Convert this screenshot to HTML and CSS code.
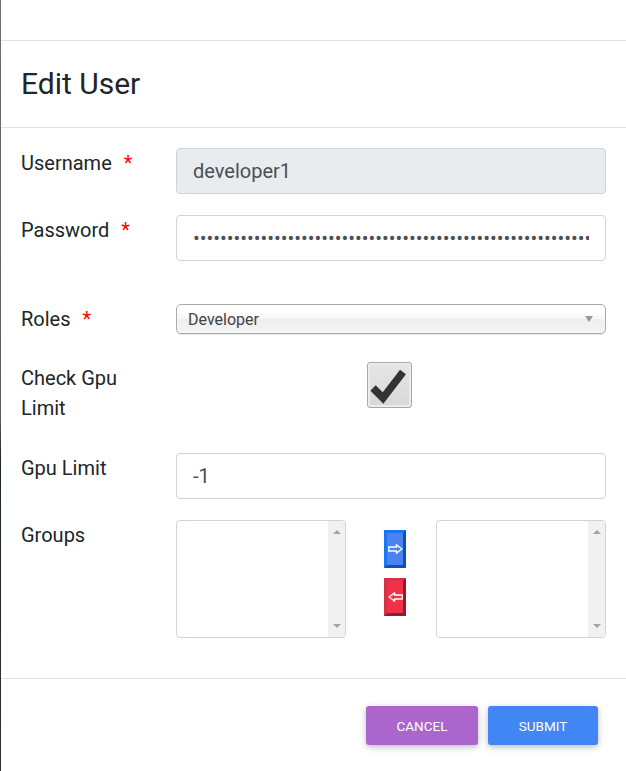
FILE: index.html
```html
<!DOCTYPE html>
<html>
<head>
<meta charset="utf-8">
<link rel="stylesheet" href="styles.css">
</head>
<body>
<div class="modal">
  <div class="topbar"></div>
  <div class="header"><h4 class="title">Edit User</h4></div>
  <form class="body">
    <div class="row row-user">
      <label class="label">Username<span class="req">*</span></label>
      <div class="field"><input class="input input-disabled" type="text" value="developer1" disabled></div>
    </div>
    <div class="row row-pass">
      <label class="label">Password<span class="req">*</span></label>
      <div class="field"><input class="input" type="password" value="aaaaaaaaaaaaaaaaaaaaaaaaaaaaaaaaaaaaaaaaaaaaaaaaaaaaaaaaaaaaaaaaaaaa"></div>
    </div>
    <div class="row row-roles">
      <label class="label">Roles<span class="req">*</span></label>
      <div class="field">
        <div class="select"><span class="select-text">Developer</span><span class="select-arrow"></span></div>
      </div>
    </div>
    <div class="row row-check">
      <label class="label">Check Gpu Limit</label>
      <div class="field field-check">
        <div class="checkbox">
          <svg width="43" height="44" viewBox="0 0 43 44"><polyline points="5,25 15,35 35,9" fill="none" stroke="#333" stroke-width="7.5"/></svg>
        </div>
      </div>
    </div>
    <div class="row row-gpu">
      <label class="label">Gpu Limit</label>
      <div class="field"><input class="input" type="text" value="-1"></div>
    </div>
    <div class="row row-groups">
      <label class="label">Groups</label>
      <div class="field field-groups">
        <div class="listbox">
          <div class="list-content"></div>
          <div class="scrollbar"><span class="tri-up"></span><span class="tri-down"></span></div>
        </div>
        <div class="movers">
          <button type="button" class="mover mover-right">
            <svg width="15" height="10" viewBox="0 0 15 10"><polygon points="0.75,3 8.5,3 8.5,0.9 14,5 8.5,9.1 8.5,7 0.75,7" fill="none" stroke="#fff" stroke-width="1.3"/></svg>
          </button>
          <button type="button" class="mover mover-left">
            <svg width="15" height="10" viewBox="0 0 15 10"><polygon points="14.25,3 6.5,3 6.5,0.9 1,5 6.5,9.1 6.5,7 14.25,7" fill="none" stroke="#fff" stroke-width="1.3"/></svg>
          </button>
        </div>
        <div class="listbox">
          <div class="list-content"></div>
          <div class="scrollbar"><span class="tri-up"></span><span class="tri-down"></span></div>
        </div>
      </div>
    </div>
  </form>
  <div class="footer">
    <button type="button" class="btn btn-cancel">Cancel</button>
    <button type="button" class="btn btn-submit">Submit</button>
  </div>
</div>
</body>
</html>
```
FILE: styles.css
```css
html, body {
  margin: 0;
  padding: 0;
}
body {
  background: linear-gradient(to bottom, #6e6e6e 0, #5c5c5c 420px, #1b2626 460px, #2a3434 771px);
  min-height: 771px;
  font-family: Roboto, "Liberation Sans", sans-serif;
  color: #212529;
}
.modal {
  width: 625px;
  margin-left: 1px;
  min-height: 771px;
  background: #fff;
}
.topbar {
  height: 40px;
  border-bottom: 1px solid #dee2e6;
}
.header {
  height: 86px;
  display: flex;
  align-items: center;
  padding: 0 20px;
  border-bottom: 1px solid #dee2e6;
}
.title {
  margin: 0;
  font-size: 30px;
  font-weight: 400;
  line-height: 36px;
  color: #212529;
}
.body {
  padding: 20px 20px 40px;
  border-bottom: 1px solid #dee2e6;
}
.row {
  display: flex;
  align-items: flex-start;
}
.row-user { margin-bottom: 21px; }
.row-pass { margin-bottom: 43px; }
.row-roles { margin-bottom: 29px; }
.row-check { margin-bottom: 30px; min-height: 60px; }
.row-gpu { margin-bottom: 21px; }
.label {
  width: 125px;
  margin-right: 30px;
  font-size: 20px;
  line-height: 30px;
  color: #212529;
}
.req {
  color: #ff0000;
  margin-left: 12px;
}
.field {
  width: 430px;
  display: flex;
}
.field-check {
  padding-left: 191px;
  box-sizing: border-box;
}
.input {
  box-sizing: border-box;
  width: 430px;
  height: 46px;
  margin: 0;
  padding: 0 16px;
  border: 1px solid #ced4da;
  border-radius: 4px;
  background: #fff;
  font-family: Roboto, "Liberation Sans", sans-serif;
  font-size: 20px;
  color: #495057;
  outline: none;
}
.input-disabled {
  background: #e9ecef;
  color: #495057;
  -webkit-text-fill-color: #495057;
  opacity: 1;
}
.select {
  box-sizing: border-box;
  width: 430px;
  height: 30px;
  border: 1px solid #aaa;
  border-radius: 5px;
  background: linear-gradient(to bottom, #fff 20%, #f6f6f6 50%, #eee 52%, #f4f4f4 100%);
  box-shadow: inset 0 0 3px #fff, 0 1px 1px rgba(0, 0, 0, 0.1);
  display: flex;
  align-items: center;
  justify-content: space-between;
  padding: 0 12px 0 11px;
}
.select-text {
  font-size: 16px;
  color: #444;
}
.select-arrow {
  width: 0;
  height: 0;
  border-left: 4px solid transparent;
  border-right: 4px solid transparent;
  border-top: 6px solid #999;
}
.checkbox {
  box-sizing: border-box;
  width: 45px;
  height: 46px;
  margin-top: -1px;
  border: 1px solid #a9a9a9;
  border-radius: 3px;
  background: linear-gradient(to bottom, #e6e6e6, #d8d8d8);
  box-shadow: inset 0 0 0 2px #ececec;
  display: flex;
  align-items: center;
  justify-content: center;
}
.field-groups {
  align-items: flex-start;
}
.listbox {
  box-sizing: border-box;
  width: 170px;
  height: 118px;
  border: 1px solid #ced4da;
  border-radius: 4px;
  display: flex;
  overflow: hidden;
  background: #fff;
}
.list-content {
  flex: 1;
}
.scrollbar {
  width: 17px;
  background: #f1f1f1;
  display: flex;
  flex-direction: column;
  justify-content: space-between;
  align-items: center;
  padding: 9px 0 9px;
}
.tri-up {
  width: 0;
  height: 0;
  border-left: 4px solid transparent;
  border-right: 4px solid transparent;
  border-bottom: 4px solid #a3a3a3;
}
.tri-down {
  width: 0;
  height: 0;
  border-left: 4px solid transparent;
  border-right: 4px solid transparent;
  border-top: 4px solid #a3a3a3;
}
.movers {
  width: 22px;
  margin: 10px 30px 0 38px;
  display: flex;
  flex-direction: column;
  gap: 10px;
}
.mover {
  box-sizing: border-box;
  width: 22px;
  height: 38px;
  padding: 0;
  margin: 0;
  border-width: 3px;
  border-style: solid;
  display: flex;
  align-items: center;
  justify-content: center;
}
.mover-right {
  background: #4a82f2;
  border-color: #1a75f5 #0b55b0 #0b55b0 #1a75f5;
}
.mover-left {
  background: #f2304a;
  border-color: #d23446 #8c2030 #8c2030 #d23446;
}
.footer {
  display: flex;
  justify-content: flex-end;
  gap: 10px;
  padding: 27px 28px 0 0;
}
.btn {
  height: 39px;
  border: none;
  border-radius: 3px;
  color: #fff;
  font-family: Roboto, "Liberation Sans", sans-serif;
  font-size: 13.5px;
  text-transform: uppercase;
  box-shadow: 0 2px 5px 0 rgba(0, 0, 0, 0.16), 0 2px 10px 0 rgba(0, 0, 0, 0.12);
  padding: 0;
}
.btn-cancel {
  width: 112px;
  background: #aa66cc;
}
.btn-submit {
  width: 110px;
  background: #4285f4;
}
```
